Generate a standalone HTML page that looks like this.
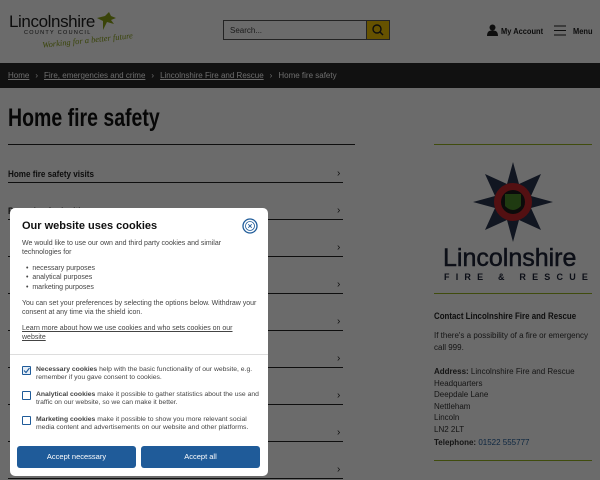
<!DOCTYPE html>
<html><head><meta charset="utf-8"><style>
*{box-sizing:border-box;margin:0;padding:0}
body{width:600px;height:480px;overflow:hidden;background:#fff;font-family:"Liberation Sans",sans-serif;position:relative;color:#222}
.hdr{height:62px;position:relative}
.logo{position:absolute;left:9px;top:12px}
.logo .l1{font-size:17px;color:#1d1d1d;letter-spacing:-.4px}
.logo .l2{font-size:5.5px;letter-spacing:1.3px;margin-left:15px;margin-top:-2px}
.logo .l3{font-family:"Liberation Serif",serif;font-style:italic;font-size:8.5px;color:#8aa317;margin-left:33px;transform:rotate(-6deg);margin-top:-1px;white-space:nowrap}
.search{position:absolute;left:223px;top:20px;width:144px;height:20px;border:1px solid #555;font-size:8px;padding:5px 6px;color:#444}
.sbtn{position:absolute;left:366px;top:20px;width:24px;height:20px;background:#f2c300;border:1px solid #555}
.acc{position:absolute;top:26px;font-size:8.5px;font-weight:bold;color:#222;white-space:nowrap;transform:scaleX(.88);transform-origin:left}
.bc{position:absolute;top:63px;height:25px;width:600px;background:#2a2a2a;color:#fff;font-size:8px;padding:8px 8px}
.bc span{margin-right:6px}.bc u{margin-right:6px}
h1{position:absolute;left:8px;top:104px;font-size:25px;font-weight:bold;color:#111;white-space:nowrap;transform:scaleX(.78);transform-origin:left}
.hr{position:absolute;left:8px;top:144px;width:347px;height:1px;background:#222}
.gr{position:absolute;left:434px;width:158px;height:1px;background:#9ab51f}
.row{position:absolute;left:8px;width:335px;height:1px;background:#222}
.rt{position:absolute;left:8px;font-size:9px;font-weight:bold;white-space:nowrap;transform:scaleX(.9);transform-origin:left}
.ch{position:absolute;left:337px;font-size:10px}
.rc{position:absolute;left:434px;font-size:8px;color:#333;line-height:11.5px;white-space:nowrap}
.ov{position:absolute;inset:0;background:rgba(0,0,0,.58)}
.modal{position:absolute;left:10px;top:208px;width:258px;height:268px;background:#fff;border-radius:5px;font-size:7px;color:#444}
.modal h2{position:absolute;left:12px;top:12px;font-size:11px;color:#111}
.p{position:absolute;left:12px;width:235px;line-height:9.3px}
.cb{position:absolute;left:12px;width:9px;height:9px;border:1.3px solid #1f5b99;border-radius:1px}
.ct{position:absolute;left:26px;width:225px;line-height:8px;font-size:6.8px}
.btn{position:absolute;top:238px;width:119px;height:22px;background:#1f5b99;color:#fff;border-radius:3px;font-size:7.5px;text-align:center;line-height:22px}
</style></head><body>
<div class="hdr">
<div class="logo"><div class="l1">Lincolnshire</div><div class="l2">COUNTY COUNCIL</div><div class="l3">Working for a better future</div></div>
<svg style="position:absolute;left:95px;top:12px" width="22" height="20"><path d="M2 6 L10 4 L14 0 L16 4 L21 6 L16 8 L19 12 L12 10 L8 18 L8 9Z" fill="#8aa317"/></svg>
<div class="search">Search...</div>
<div class="sbtn"><svg width="22" height="18"><circle cx="10" cy="8" r="4" fill="none" stroke="#222" stroke-width="1.4"/><path d="M13 11 L16 14" stroke="#222" stroke-width="1.5"/></svg></div>
<svg style="position:absolute;left:487px;top:24px" width="11" height="12"><circle cx="5.5" cy="3.5" r="3" fill="#222"/><path d="M0 12 Q0 6 5.5 6.5 Q11 6 11 12Z" fill="#222"/></svg>
<div class="acc" style="left:501px">My Account</div>
<svg style="position:absolute;left:554px;top:25px" width="12" height="11"><path d="M0 1H12M0 5.5H12M0 10H12" stroke="#222" stroke-width="1"/></svg>
<div class="acc" style="left:573px">Menu</div>
</div>
<div class="bc"><u>Home</u><span>›</span><u>Fire, emergencies and crime</u><span>›</span><u>Lincolnshire Fire and Rescue</u><span>›</span><span>Home fire safety</span></div>
<h1>Home fire safety</h1>
<div class="hr"></div>
<div class="gr" style="top:144px"></div>
<div class="rt" style="top:169px">Home fire safety visits</div>
<div class="row" style="top:182px"></div><div class="ch" style="top:168px">›</div>
<div class="rt" style="top:206px">Preparing for bedtime</div>
<div class="row" style="top:219px"></div><div class="ch" style="top:205px">›</div>
<div class="row" style="top:256px"></div><div class="ch" style="top:242px">›</div>
<div class="row" style="top:293px"></div><div class="ch" style="top:279px">›</div>
<div class="row" style="top:330px"></div><div class="ch" style="top:316px">›</div>
<div class="row" style="top:367px"></div><div class="ch" style="top:353px">›</div>
<div class="row" style="top:404px"></div><div class="ch" style="top:390px">›</div>
<div class="row" style="top:441px"></div><div class="ch" style="top:427px">›</div>
<div class="row" style="top:478px"></div><div class="ch" style="top:464px">›</div>
<svg style="position:absolute;left:473px;top:162px" width="80" height="80" viewBox="0 0 80 80">
<polygon points="40,0 46,22 68,12 58,34 80,40 58,46 68,68 46,58 40,80 34,58 12,68 22,46 0,40 22,34 12,12 34,22" fill="#2a3550"/>
<circle cx="40" cy="40" r="19" fill="#c6262b"/><circle cx="40" cy="40" r="12" fill="#1b1b1b"/><path d="M32 32H48V44Q40 52 32 44Z" fill="#4a8a2a"/></svg>
<div style="position:absolute;left:443px;top:244px;font-size:25px;color:#1e2438;white-space:nowrap;-webkit-text-stroke:.5px #1e2438">Lincolnshire</div>
<div style="position:absolute;left:444px;top:272px;font-size:9px;font-weight:bold;letter-spacing:6.2px;color:#1e2438;white-space:nowrap">FIRE &amp; RESCUE</div>
<div class="gr" style="top:293px"></div>
<div class="rc" style="top:311px;font-weight:bold;font-size:9px;color:#222;transform:scaleX(.88);transform-origin:left">Contact Lincolnshire Fire and Rescue</div>
<div class="rc" style="top:330px">If there's a possibility of a fire or emergency<br>call 999.</div>
<div class="rc" style="top:366px"><b>Address:</b> Lincolnshire Fire and Rescue<br>Headquarters<br>Deepdale Lane<br>Nettleham<br>Lincoln<br>LN2 2LT</div>
<div class="rc" style="top:437px"><b>Telephone:</b> <span style="color:#1f5b99">01522 555777</span></div>
<div class="gr" style="top:460px"></div>
<div class="ov"></div>
<div class="modal">
<h2>Our website uses cookies</h2>
<svg style="position:absolute;left:232px;top:10px" width="16" height="16"><circle cx="8" cy="8" r="7" fill="none" stroke="#1f5b99" stroke-width="1.3"/><circle cx="8" cy="8" r="4.5" fill="none" stroke="#1f5b99" stroke-width=".8"/><path d="M6.3 6.3L9.7 9.7M9.7 6.3L6.3 9.7" stroke="#1f5b99" stroke-width=".9"/></svg>
<div class="p" style="top:31px">We would like to use our own and third party cookies and similar technologies for</div>
<div class="p" style="top:56px;left:16px">• &nbsp;necessary purposes<br>• &nbsp;analytical purposes<br>• &nbsp;marketing purposes</div>
<div class="p" style="top:91px">You can set your preferences by selecting the options below. Withdraw your consent at any time via the shield icon.</div>
<div class="p" style="top:116px;text-decoration:underline">Learn more about how we use cookies and who sets cookies on our website</div>
<div style="position:absolute;left:0;top:146px;width:258px;height:1px;background:#ddd"></div>
<div class="cb" style="top:158px;background:#e6eef7"><svg width="7" height="7" style="position:absolute;left:0;top:0"><path d="M1 3.5L3 5.5L6.5 1" stroke="#1f5b99" fill="none" stroke-width="1.1"/></svg></div>
<div class="ct" style="top:158px"><b>Necessary cookies</b> help with the basic functionality of our website, e.g. remember if you gave consent to cookies.</div>
<div class="cb" style="top:183px"></div>
<div class="ct" style="top:183px"><b>Analytical cookies</b> make it possible to gather statistics about the use and traffic on our website, so we can make it better.</div>
<div class="cb" style="top:208px"></div>
<div class="ct" style="top:208px"><b>Marketing cookies</b> make it possible to show you more relevant social media content and advertisements on our website and other platforms.</div>
<div class="btn" style="left:7px">Accept necessary</div>
<div class="btn" style="left:131px">Accept all</div>
</div>
</body></html>
